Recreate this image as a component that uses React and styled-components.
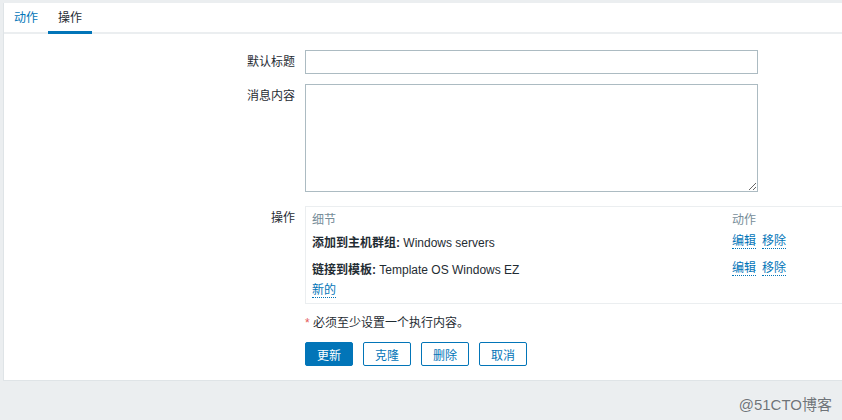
import React from 'react'
import styled, { createGlobalStyle } from 'styled-components'

const operations = [
  { id: 1, title: '添加到主机群组:', value: 'Windows servers' },
  { id: 2, title: '链接到模板:', value: 'Template OS Windows EZ' },
]

const buttons = [
  { id: 'update', label: '更新', primary: true },
  { id: 'clone', label: '克隆' },
  { id: 'delete', label: '删除' },
  { id: 'cancel', label: '取消' },
]

const App = () => {
  return (
    <>
      <GlobalStyle />
      <Panel>
        <Tabs>
          <Tab>动作</Tab>
          <Tab active>操作</Tab>
        </Tabs>

        <Form>
          <Row>
            <Label>默认标题</Label>
            <TextInput type='text' />
          </Row>
          <Row gap={10}>
            <Label>消息内容</Label>
            <TextArea />
          </Row>
          <Row gap={14}>
            <Label>操作</Label>
            <OpBox>
              <OpHead>
                <span>细节</span>
                <span>动作</span>
              </OpHead>
              {operations.map((op, i) => (
                <OpRow key={op.id} second={i > 0}>
                  <span>
                    <b>{op.title}</b> {op.value}
                  </span>
                  <Actions>
                    <DottedLink href='#'>编辑</DottedLink>
                    <DottedLink href='#'>移除</DottedLink>
                  </Actions>
                </OpRow>
              ))}
              <NewRow>
                <DottedLink href='#'>新的</DottedLink>
              </NewRow>
            </OpBox>
          </Row>
          <Row gap={7}>
            <span />
            <Note>
              <Star>*</Star> 必须至少设置一个执行内容。
            </Note>
          </Row>
          <Row gap={7}>
            <span />
            <Buttons>
              {buttons.map((b) => (
                <Button key={b.id} primary={b.primary}>
                  {b.label}
                </Button>
              ))}
            </Buttons>
          </Row>
        </Form>
      </Panel>
      <Watermark>@51CTO博客</Watermark>
    </>
  )
}

export default App

// Styles
const GlobalStyle = createGlobalStyle`
  html, body {
    margin: 0;
    padding: 0;
    background: #ebeef0;
    overflow: hidden;
  }
  body {
    font-family: "Liberation Sans", "Noto Sans CJK SC", sans-serif;
    font-size: 12px;
    color: #1f2c33;
  }
`

const Panel = styled.div`
  margin: 3px 0 0 3px;
  background: #fff;
  border-left: 1px solid #dfe4e7;
  border-bottom: 1px solid #dfe4e7;
  padding-bottom: 14px;
`

const Tabs = styled.div`
  display: flex;
  height: 29px;
  border-bottom: 2px solid #ebeef0;
`

const Tab = styled.div`
  padding: 0 10px;
  height: 31px;
  line-height: 30px;
  box-sizing: border-box;
  color: ${(p) => (p.active ? '#1f2c33' : '#0275b8')};
  border-bottom: 3px solid ${(p) => (p.active ? '#0275b8' : 'transparent')};
  margin-bottom: -2px;
`

const Form = styled.div`
  padding-top: 16px;
`

const Row = styled.div`
  display: grid;
  grid-template-columns: 291px 1fr;
  column-gap: 10px;
  align-items: start;
  margin-top: ${(p) => p.gap || 0}px;
`

const Label = styled.div`
  text-align: right;
  line-height: 24px;
`

const TextInput = styled.input`
  width: 453px;
  height: 24px;
  box-sizing: border-box;
  border: 1px solid #acbbc2;
  margin: 0;
  padding: 0 5px;
  outline: none;
`

const TextArea = styled.textarea`
  display: block;
  width: 453px;
  height: 108px;
  box-sizing: border-box;
  border: 1px solid #acbbc2;
  margin: 0;
  padding: 4px 5px;
  resize: both;
  outline: none;
`

const OpBox = styled.div`
  border: 1px solid #ebeef0;
  border-right: none;
  padding: 0 0 2px 6px;
`

const OpHead = styled.div`
  display: grid;
  grid-template-columns: 420px auto;
  height: 23px;
  align-items: center;
  color: #768d99;
`

const OpRow = styled.div`
  display: grid;
  grid-template-columns: 420px auto;
  height: 22px;
  align-items: center;
  margin-top: ${(p) => (p.second ? 5 : 0)}px;

  & b {
    font-weight: bold;
  }
`

const Actions = styled.div`
  display: flex;
  gap: 6px;
`

const DottedLink = styled.a`
  color: #0275b8;
  text-decoration: none;
  border-bottom: 1px dotted #0275b8;
  line-height: 14px;
`

const NewRow = styled.div`
  height: 22px;
  display: flex;
  align-items: center;
`

const Note = styled.div`
  line-height: 24px;
`

const Star = styled.span`
  color: #e45959;
`

const Buttons = styled.div`
  display: flex;
  gap: 10px;
`

const Button = styled.button`
  height: 24px;
  width: 48px;
  padding: 0;
  font-family: inherit;
  font-size: 12px;
  border-radius: 2px;
  border: 1px solid #0275b8;
  background: ${(p) => (p.primary ? '#0275b8' : '#fff')};
  color: ${(p) => (p.primary ? '#fff' : '#0275b8')};
  cursor: pointer;
`

const Watermark = styled.div`
  text-align: right;
  padding: 12px 10px 0 0;
  font-size: 15px;
  color: #6f7479;
  text-shadow: 0 0 1px #fff;
`
